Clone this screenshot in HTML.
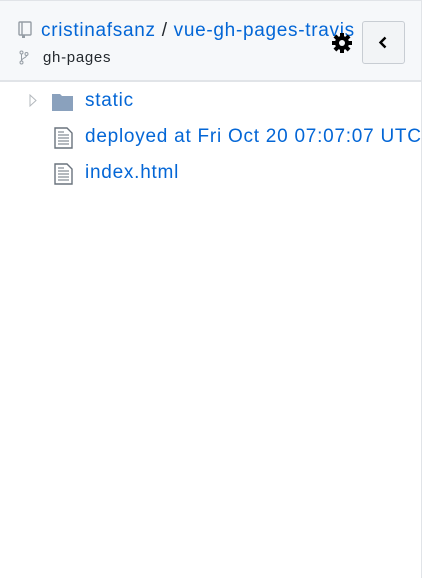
<!DOCTYPE html>
<html><head><style>
body{margin:0;width:423px;height:579px;background:#fff;font-family:"Liberation Sans",sans-serif;position:relative;overflow:hidden}
.frame{position:absolute;left:0;top:0;width:421px;height:577px;border-top:1px solid #e1e4e8;border-right:1px solid #e1e4e8}
.hdr{position:absolute;left:0;top:1px;width:421px;height:79px;background:#f6f8fa;border-bottom:2px solid #e1e4e8}
.repo{position:absolute;left:41px;top:20px;font-size:19px;letter-spacing:0.7px;color:#0366d6;white-space:nowrap;width:321px;overflow:hidden}
.repo span{color:#24292e}
.branch{position:absolute;left:43px;top:49px;font-size:15px;letter-spacing:0.7px;color:#24292e}
.btn{position:absolute;left:362px;top:21px;width:41px;height:41px;border:1px solid #c8cdd3;border-radius:3px;background:#f2f4f6}
.row{position:absolute;left:85px;font-size:19px;letter-spacing:0.75px;color:#0366d6;white-space:nowrap}
</style></head><body>
<div class="frame"></div>
<div class="hdr"></div>
<svg style="position:absolute;left:18px;top:21px" width="14" height="17" viewBox="0 0 14 17"><rect x="1" y="1" width="12" height="13" rx="1" fill="none" stroke="#959da5" stroke-width="1.4"/><line x1="4" y1="1" x2="4" y2="14" stroke="#959da5" stroke-width="1.4"/><rect x="4" y="14" width="3" height="3" fill="#959da5"/></svg>
<div class="repo">cristinafsanz <span>/</span> vue-gh-pages-travis</div>
<svg style="position:absolute;left:19px;top:50px" width="10" height="15" viewBox="0 0 10 15"><circle cx="2.5" cy="2.5" r="1.5" fill="none" stroke="#959da5"/><circle cx="7.5" cy="4" r="1.5" fill="none" stroke="#959da5"/><circle cx="2.5" cy="12.5" r="1.5" fill="none" stroke="#959da5"/><path d="M2.5 4V11M7.5 5.5C7.5 8 2.5 8 2.5 11" fill="none" stroke="#959da5"/></svg>
<div class="branch">gh-pages</div>
<svg style="position:absolute;left:331px;top:32px" width="22" height="22" viewBox="0 0 22 22"><g fill="#000"><circle cx="11" cy="11" r="7"/><g id="t"><rect x="9" y="1" width="4" height="20"/></g><use href="#t" transform="rotate(45 11 11)"/><use href="#t" transform="rotate(90 11 11)"/><use href="#t" transform="rotate(135 11 11)"/></g><circle cx="11" cy="11" r="3" fill="#f6f8fa"/></svg>
<div class="btn"><svg style="position:absolute;left:15px;top:14px" width="10" height="13" viewBox="0 0 10 13"><path d="M7.5 1.5L2.5 6.5L7.5 11.5" fill="none" stroke="#000" stroke-width="2.4"/></svg></div>
<svg style="position:absolute;left:29px;top:94px" width="8" height="13" viewBox="0 0 8 13"><path d="M1 1L7 6.5L1 12Z" fill="none" stroke="#b3b8bd"/></svg>
<svg style="position:absolute;left:52px;top:93px" width="22" height="18" viewBox="0 0 22 18"><path d="M0 1H8L10 3H21V18H0Z" fill="#8aa1bd"/></svg>
<div class="row" style="top:90px">static</div>
<svg style="position:absolute;left:54px;top:127px" width="19" height="22" viewBox="0 0 19 22"><path d="M1 1H13L18 6V21H1Z" fill="none" stroke="#6a737d" stroke-width="1.4"/><path d="M4 8H15M4 11H15M4 14H15M4 17H15M4 5H10" stroke="#6a737d"/></svg>
<div class="row" style="top:126px">deployed at Fri Oct 20 07:07:07 UTC</div>
<svg style="position:absolute;left:54px;top:163px" width="19" height="22" viewBox="0 0 19 22"><path d="M1 1H13L18 6V21H1Z" fill="none" stroke="#6a737d" stroke-width="1.4"/><path d="M4 8H15M4 11H15M4 14H15M4 17H15M4 5H10" stroke="#6a737d"/></svg>
<div class="row" style="top:162px">index.html</div>
</body></html>
